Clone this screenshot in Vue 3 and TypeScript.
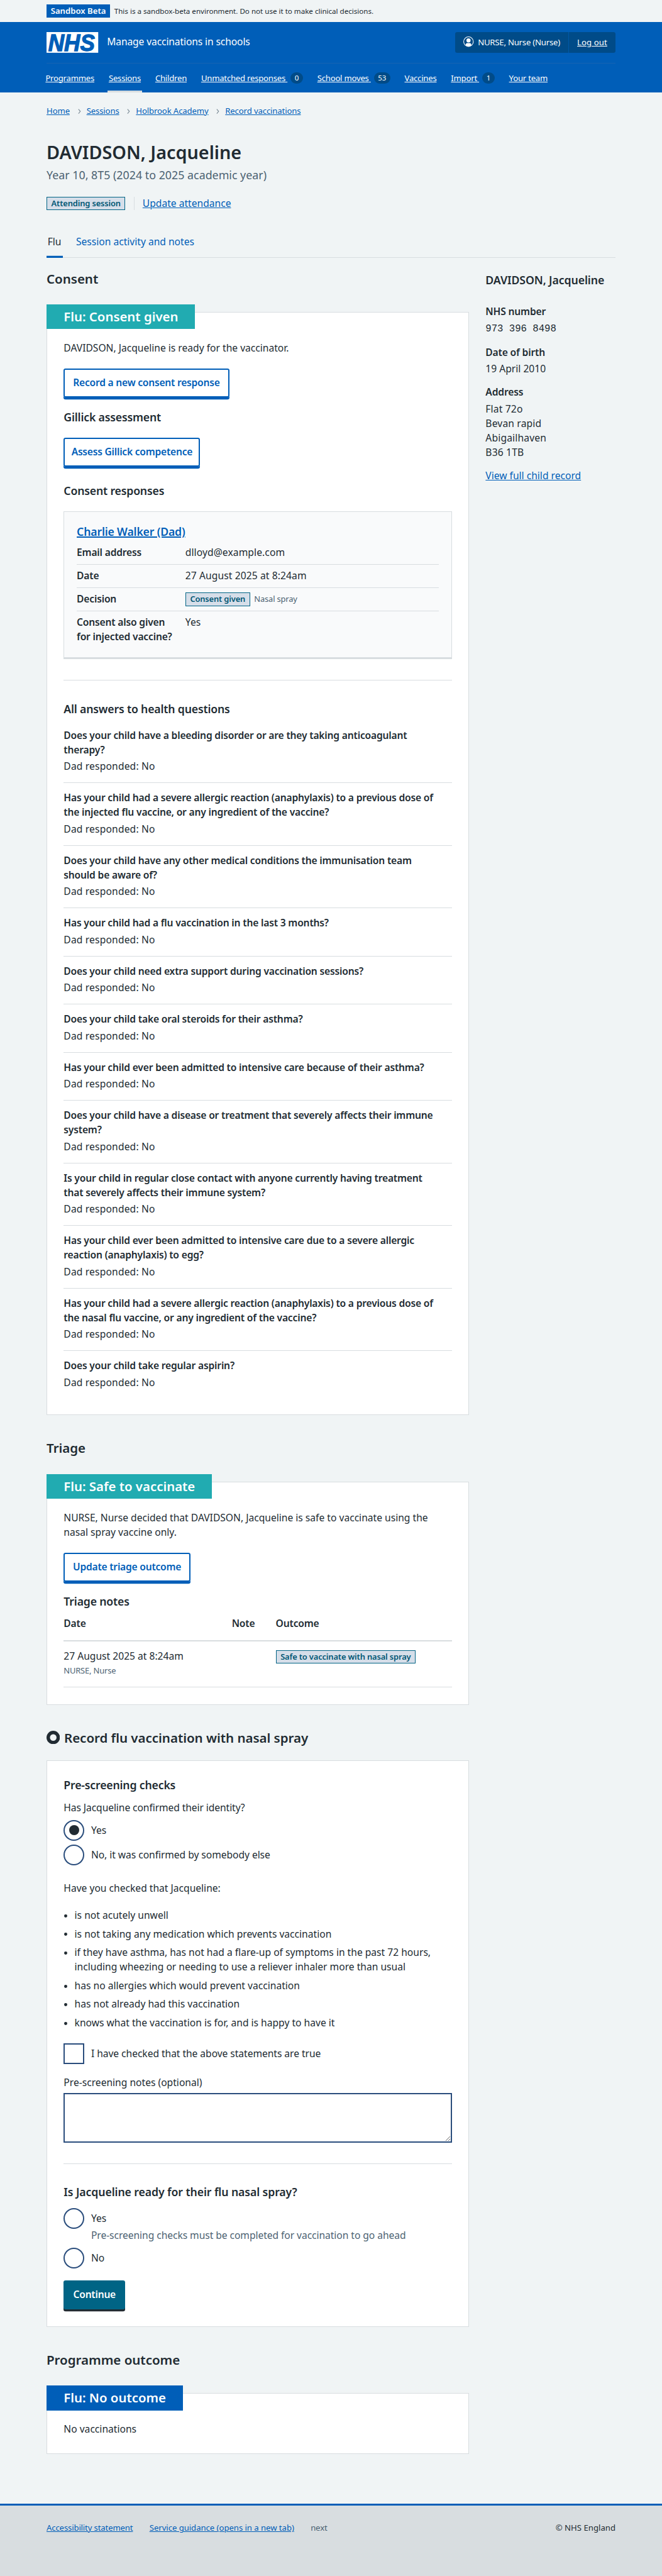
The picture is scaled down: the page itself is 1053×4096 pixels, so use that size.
<script setup lang="ts">
interface NavItem {
  label: string
  count?: number
  current?: boolean
}

const navItems: NavItem[] = [
  { label: 'Programmes' },
  { label: 'Sessions', current: true },
  { label: 'Children' },
  { label: 'Unmatched responses', count: 0 },
  { label: 'School moves', count: 53 },
  { label: 'Vaccines' },
  { label: 'Import', count: 1 },
  { label: 'Your team' },
]

const breadcrumbs: string[] = ['Home', 'Sessions', 'Holbrook Academy', 'Record vaccinations']

const address: string[] = ['Flat 72o', 'Bevan rapid', 'Abigailhaven', 'B36 1TB']

const questions: string[][] = [
  ['Does your child have a bleeding disorder or are they taking anticoagulant', 'therapy?'],
  ['Has your child had a severe allergic reaction (anaphylaxis) to a previous dose of', 'the injected flu vaccine, or any ingredient of the vaccine?'],
  ['Does your child have any other medical conditions the immunisation team', 'should be aware of?'],
  ['Has your child had a flu vaccination in the last 3 months?'],
  ['Does your child need extra support during vaccination sessions?'],
  ['Does your child take oral steroids for their asthma?'],
  ['Has your child ever been admitted to intensive care because of their asthma?'],
  ['Does your child have a disease or treatment that severely affects their immune', 'system?'],
  ['Is your child in regular close contact with anyone currently having treatment', 'that severely affects their immune system?'],
  ['Has your child ever been admitted to intensive care due to a severe allergic', 'reaction (anaphylaxis) to egg?'],
  ['Has your child had a severe allergic reaction (anaphylaxis) to a previous dose of', 'the nasal flu vaccine, or any ingredient of the vaccine?'],
  ['Does your child take regular aspirin?'],
]

const statements: string[][] = [
  ['is not acutely unwell'],
  ['is not taking any medication which prevents vaccination'],
  ['if they have asthma, has not had a flare-up of symptoms in the past 72 hours,', 'including wheezing or needing to use a reliever inhaler more than usual'],
  ['has no allergies which would prevent vaccination'],
  ['has not already had this vaccination'],
  ['knows what the vaccination is for, and is happy to have it'],
]
</script>

<template>
  <div class="page">
    <div class="banner">
      <strong class="banner-tag">Sandbox Beta</strong>
      <span class="banner-text">This is a sandbox-beta environment. Do not use it to make clinical decisions.</span>
    </div>

    <header class="header">
      <div class="header-top">
        <svg class="logo" viewBox="0 0 100 40" role="img" aria-label="NHS">
          <rect width="100" height="40" fill="#fff" />
          <text x="3.4" y="36" font-size="46" textLength="90" lengthAdjust="spacingAndGlyphs">NHS</text>
        </svg>
        <span class="service">Manage vaccinations in schools</span>
        <div class="account">
          <div class="account-user">
            <svg class="account-icon" viewBox="0 0 20 20" aria-hidden="true">
              <circle cx="10" cy="10" r="9.3" fill="none" stroke="#fff" stroke-width="1.3" />
              <circle cx="10" cy="7.6" r="4" fill="#fff" />
              <path d="M4.6 17.2v-1.400c0-1.800 1.300-3 3-3h4.800c1.700 0 3 1.200 3 3v1.400a9 9 0 0 1-10.800 0z" fill="#fff" />
            </svg>
            <span class="account-name">NURSE, Nurse (Nurse)</span>
          </div>
          <a class="account-out">Log out</a>
        </div>
      </div>
      <nav class="nav">
        <div v-for="item in navItems" :key="item.label" class="nav-item" :class="{ current: item.current }">
          <a>{{ item.label }}<template v-if="item.count !== undefined">&nbsp;</template></a>
          <span v-if="item.count !== undefined" class="count">{{ item.count }}</span>
        </div>
      </nav>
    </header>

    <div class="container">
      <nav class="breadcrumbs">
        <template v-for="(crumb, i) in breadcrumbs" :key="crumb">
          <svg v-if="i > 0" class="chevron" viewBox="0 0 6 10" aria-hidden="true">
            <path d="M1 .8L4.600 5L1 9.200" fill="none" stroke="#768692" stroke-width="1.300" />
          </svg>
          <a class="link">{{ crumb }}</a>
        </template>
      </nav>

      <h1>DAVIDSON, Jacqueline</h1>
      <p class="caption">Year 10, 8T5 (2024 to 2025 academic year)</p>
      <div class="attendance">
        <strong class="tag">Attending session</strong>
        <a class="link attendance-link">Update attendance</a>
      </div>

      <div class="tabs">
        <span class="tab active">Flu</span>
        <span class="tab">Session activity and notes</span>
      </div>

      <div class="columns">
        <main class="main">
          <h2 class="first">Consent</h2>
          <section class="card consent-card">
            <h3 class="card-title aqua">Flu: Consent given</h3>
            <p class="lead">DAVIDSON, Jacqueline is ready for the vaccinator.</p>
            <a class="button outline w-record">Record a new consent response</a>
            <h4 class="after-button">Gillick assessment</h4>
            <a class="button outline w-assess">Assess Gillick competence</a>
            <h4 class="responses-title">Consent responses</h4>
            <div class="response">
              <h4><a class="link thick">Charlie Walker (Dad)</a></h4>
              <div class="row">
                <span class="key">Email address</span><span class="value">dlloyd@example.com</span>
              </div>
              <div class="row">
                <span class="key">Date</span><span class="value">27 August 2025 at 8:24am</span>
              </div>
              <div class="row">
                <span class="key">Decision</span>
                <span class="decision"><strong class="tag">Consent given</strong><span class="small">Nasal spray</span></span>
              </div>
              <div class="row last">
                <span class="key">Consent also given<br />for injected vaccine?</span><span class="value">Yes</span>
              </div>
            </div>
            <hr class="rule" />
            <h4 class="answers-title">All answers to health questions</h4>
            <dl>
              <div v-for="(q, i) in questions" :key="i" class="qa" :class="{ tall: q.length > 1 }">
                <dt><template v-for="(line, n) in q" :key="n"><br v-if="n > 0" />{{ line }}</template></dt>
                <dd>Dad responded: No</dd>
              </div>
            </dl>
          </section>

          <h2>Triage</h2>
          <section class="card triage-card">
            <h3 class="card-title aqua">Flu: Safe to vaccinate</h3>
            <p class="lead">NURSE, Nurse decided that DAVIDSON, Jacqueline is safe to vaccinate using the<br />nasal spray vaccine only.</p>
            <a class="button outline w-triage">Update triage outcome</a>
            <h4 class="after-button">Triage notes</h4>
            <div class="notes">
              <div class="notes-head"><span>Date</span><span>Note</span><span>Outcome</span></div>
              <div class="notes-row">
                <div>
                  <div>27 August 2025 at 8:24am</div>
                  <div class="small author">NURSE, Nurse</div>
                </div>
                <div></div>
                <div class="outcome"><strong class="tag">Safe to vaccinate with nasal spray</strong></div>
              </div>
            </div>
          </section>

          <h2 class="record-title">
            <svg class="ring" viewBox="0 0 26 26" aria-hidden="true">
              <circle cx="13" cy="13" r="9.700" fill="none" stroke="#212b32" stroke-width="6.600" />
            </svg>
            Record flu vaccination with nasal spray
          </h2>
          <section class="card record-card">
            <h4 class="checks-title">Pre-screening checks</h4>
            <p class="identity">Has Jacqueline confirmed their identity?</p>
            <div class="choice"><span class="radio checked"></span><span>Yes</span></div>
            <div class="choice next"><span class="radio"></span><span>No, it was confirmed by somebody else</span></div>
            <p class="checked-that">Have you checked that Jacqueline:</p>
            <ul>
              <li v-for="(s, i) in statements" :key="i">
                <template v-for="(line, n) in s" :key="n"><br v-if="n > 0" />{{ line }}</template>
              </li>
            </ul>
            <div class="choice confirm"><span class="checkbox"></span><span>I have checked that the above statements are true</span></div>
            <p class="notes-label">Pre-screening notes (optional)</p>
            <textarea></textarea>
            <hr class="rule form-rule" />
            <h4 class="ready-title">Is Jacqueline ready for their flu nasal spray?</h4>
            <div class="choice ready"><span class="radio"></span><span>Yes</span></div>
            <p class="hint">Pre-screening checks must be completed for vaccination to go ahead</p>
            <div class="choice after-hint"><span class="radio"></span><span>No</span></div>
            <a class="button solid">Continue</a>
          </section>

          <h2>Programme outcome</h2>
          <section class="card outcome-card">
            <h3 class="card-title blue">Flu: No outcome</h3>
            <p class="lead">No vaccinations</p>
          </section>
        </main>

        <aside class="side">
          <h4>DAVIDSON, Jacqueline</h4>
          <div class="fact number"><b>NHS number</b><span><span class="mono">973 396 8498</span></span></div>
          <div class="fact dob"><b>Date of birth</b><span>19 April 2010</span></div>
          <div class="fact address"><b>Address</b><span v-for="line in address" :key="line" class="line">{{ line }}</span></div>
          <a class="link side-link">View full child record</a>
        </aside>
      </div>
    </div>

    <footer class="footer">
      <div class="footer-inner">
        <a class="link">Accessibility statement</a>
        <a class="link guidance">Service guidance (opens in a new tab)</a>
        <span class="version">next</span>
        <span class="copyright">© NHS England</span>
      </div>
    </footer>
  </div>
</template>

<style>
html {
  font-size: 8.2255px;
}
body {
  margin: 0;
  background: #d8dde0;
}
</style>

<style scoped>
.page,
.page * {
  box-sizing: border-box;
}
.page {
  height: 498rem;
  background: #f0f4f5;
  color: #212b32;
  font-family: "Noto Sans", "Open Sans", sans-serif;
  font-size: 1.9rem;
  line-height: 2.8rem;
  display: flex;
  flex-direction: column;
  overflow: hidden;
}
h1, h2, h3, h4, p, ul, dl, dd, dt {
  margin: 0;
  padding: 0;
}
.link {
  color: #005eb8;
  text-decoration: underline;
  text-decoration-thickness: 1px;
  white-space: nowrap;
}
.thick {
  text-decoration-thickness: 2px;
}

.banner {
  flex: none;
  height: 4.2rem;
  padding: 0 9rem;
  display: flex;
  align-items: center;
  gap: 0.8rem;
}
.banner-tag {
  background: #005eb8;
  color: #fff;
  width: 12.3rem;
  height: 2.6rem;
  line-height: 2.6rem;
  text-align: center;
  font-size: 1.6rem;
  font-weight: 600;
}
.banner-text {
  font-size: 1.41rem;
}

.header {
  flex: none;
  height: 13.7rem;
  background: #005eb8;
  color: #fff;
  padding: 2rem 9rem 0;
}
.header-top {
  height: 6.1rem;
  display: flex;
  align-items: flex-start;
  border-bottom: 1px solid #1763b2;
}
.logo {
  display: block;
  width: 10rem;
  height: 4rem;
  overflow: visible;
}
.logo text {
  font-family: "Liberation Sans", Arial, sans-serif;
  font-weight: 700;
  font-style: italic;
  fill: #005eb8;
  stroke: #005eb8;
  stroke-width: 1.6;
}
.service {
  margin-left: 1.7rem;
  line-height: 3.8rem;
  letter-spacing: -0.014rem;
}
.account {
  margin-left: auto;
  width: 31rem;
  height: 4rem;
  display: flex;
  background: #004b88;
  border-radius: 0.4rem;
  font-size: 1.6rem;
  line-height: 4rem;
  white-space: nowrap;
}
.account-user {
  width: 22rem;
  padding-left: 1.6rem;
  display: flex;
  border-right: 1px solid #0059a8;
}
.account-icon {
  width: 2rem;
  height: 2rem;
  margin: 0.9rem 0.8rem 0 0;
}
.account-name {
  letter-spacing: -0.027rem;
}
.account-out {
  flex: 1;
  text-align: center;
  text-decoration: underline;
  letter-spacing: 0.01rem;
}
.nav {
  height: 5.6rem;
  margin-left: -0.2rem;
  display: flex;
  gap: 2.78rem;
  font-size: 1.6rem;
  letter-spacing: -0.029rem;
  white-space: nowrap;
}
.nav-item {
  display: flex;
  align-items: center;
  height: 5.6rem;
}
.nav-item.current {
  margin: 0 -0.2rem;
  padding: 3px 0.2rem 0;
  border-bottom: 3px solid #d8dde0;
}
.nav a {
  text-decoration: underline;
}
.count {
  margin-left: 0.6rem;
  min-width: 2.4rem;
  height: 2.2rem;
  padding: 0 0.8rem;
  border-radius: 1.2rem;
  background: #004b88;
  font-size: 1.4rem;
  line-height: 2.3rem;
  text-align: center;
}

.container {
  flex: 1;
  padding: 0 9rem;
}
.breadcrumbs {
  margin-top: 2.38rem;
  height: 2.4rem;
  line-height: 2.4rem;
  font-size: 1.6rem;
  letter-spacing: -0.016rem;
  display: flex;
  align-items: center;
}
.chevron {
  width: 0.6rem;
  height: 1rem;
  margin: 0.2rem 1.1rem 0 1.55rem;
}
h1 {
  margin-top: 4.56rem;
  font-size: 3.5rem;
  line-height: 4.4rem;
  font-weight: 600;
}
.caption {
  margin-top: 0.62rem;
  font-size: 2.17rem;
  line-height: 3.2rem;
  color: #4c6272;
}
.attendance {
  margin-top: 2.54rem;
  height: 2.6rem;
  display: flex;
  align-items: center;
}
.attendance-link {
  margin-left: 1.6rem;
  padding-left: 1.6rem;
  border-left: 1px solid #d8dde0;
  line-height: 2.6rem;
}
.tag {
  display: inline-block;
  height: 2.6rem;
  padding: 0 0.8rem;
  border: 1px solid #006385;
  background: #d6dee9;
  color: #005674;
  font-size: 1.57rem;
  line-height: 2.3rem;
  font-weight: 600;
  letter-spacing: -0.018rem;
  white-space: nowrap;
}
.tabs {
  margin-top: 4.76rem;
  height: 4.54rem;
  display: flex;
  gap: 2.4rem;
  border-bottom: 1px solid #d8dde0;
}
.tab {
  padding: 0 0.2rem;
  height: 4.54rem;
  color: #005eb8;
}
.tab.active {
  width: 3.1rem;
  color: #212b32;
  box-shadow: inset 0 -0.4rem #005eb8;
}

.columns {
  display: flex;
}
.main {
  width: 81.7rem;
  margin-right: 3.2rem;
}
h2 {
  margin-top: 4.73rem;
  font-size: 2.5rem;
  line-height: 3.2rem;
  font-weight: 600;
  letter-spacing: -0.005rem;
}
h2.first {
  margin-top: 2.33rem;
}
h4 {
  font-size: 2.15rem;
  line-height: 2.8rem;
  font-weight: 600;
  letter-spacing: -0.022rem;
}
.card {
  margin-top: 4.87rem;
  padding: 0 3.2rem;
  background: #fff;
  border: 1px solid #d8dde0;
}
.card-title {
  width: fit-content;
  height: 4.8rem;
  margin: -1.6rem 0 0 -3.32rem;
  padding: 0 3.25rem 0 3.3rem;
  color: #fff;
  font-size: 2.48rem;
  line-height: 4.75rem;
  font-weight: 600;
}
.aqua {
  background: #21abb1;
}
.blue {
  background: #005eb8;
}
.consent-card {
  height: 213.3rem;
}
.triage-card {
  height: 43.15rem;
}
.record-card {
  height: 109.5rem;
}
.outcome-card {
  height: 11.8rem;
}
.lead {
  margin-top: 2.26rem;
  white-space: nowrap;
}
.button {
  display: block;
  margin-top: 2.54rem;
  height: 5.6rem;
  border-radius: 0.4rem;
  line-height: 5.1rem;
  text-align: center;
  font-weight: 600;
  letter-spacing: -0.028rem;
  white-space: nowrap;
}
.outline {
  border: 2px solid #005eb8;
  color: #005eb8;
  box-shadow: 0 0.4rem #005eb8;
}
.solid {
  background: #006485;
  color: #fff;
  width: 11.9rem;
  margin-top: 2.4rem;
  line-height: 5.4rem;
  box-shadow: 0 0.4rem #212b32;
}
.w-record {
  width: 32rem;
}
.w-assess {
  width: 26.4rem;
}
.w-triage {
  width: 24.5rem;
}
.after-button {
  margin-top: 2.5rem;
}
.responses-title {
  margin-top: 3.27rem;
}
.response {
  margin-top: 2.5rem;
  height: 28.6rem;
  padding: 2.45rem 2.4rem 0;
  background: #f9fafb;
  border: 1px solid #d8dde0;
  border-bottom-width: 3px;
}
.row {
  height: 4.5rem;
  padding-top: 0.71rem;
  display: flex;
  border-bottom: 1px solid #d8dde0;
}
.response h4 {
  margin-bottom: 0.48rem;
}
.row.last {
  height: 7.1rem;
  border-bottom: 0;
}
.key {
  width: 21rem;
  font-weight: 600;
  letter-spacing: -0.022rem;
  white-space: nowrap;
}
.value {
  letter-spacing: 0.012rem;
}
.decision {
  display: flex;
  align-items: center;
  gap: 0.8rem;
  height: 2.8rem;
  margin-top: 0.1rem;
}
.small {
  font-size: 1.57rem;
  line-height: 2.4rem;
  letter-spacing: -0.02rem;
  color: #4c6272;
}
.rule {
  height: 1px;
  margin: 4rem 0 0;
  border: 0;
  background: #d8dde0;
}
.answers-title {
  margin-top: 4.1rem;
}
dl {
  margin-top: 0.88rem;
}
.qa {
  height: 9.3rem;
  padding-top: 1.46rem;
  border-bottom: 1px solid #d8dde0;
  white-space: nowrap;
}
.qa.tall {
  height: 12.1rem;
}
.qa:last-child {
  border-bottom: 0;
}
dt {
  font-weight: 600;
  letter-spacing: -0.022rem;
}
dd {
  margin-top: 0.4rem;
  letter-spacing: 0.02rem;
}
.notes-head,
.notes-row {
  display: grid;
  grid-template-columns: 32.5rem 8.5rem 1fr;
  border-bottom: 2px solid #d8dde0;
}
.notes-head {
  height: 6.28rem;
  padding-top: 1.49rem;
  font-weight: 600;
  letter-spacing: -0.02rem;
}
.notes-row {
  height: 8.85rem;
  padding-top: 1.46rem;
  border-bottom-width: 1px;
}
.author {
  margin-top: 0.32rem;
}
.outcome {
  padding-top: 0.24rem;
  line-height: 0;
}
.outcome .tag {
  line-height: 2.3rem;
}

.record-title {
  display: flex;
  align-items: center;
  gap: 0.8rem;
}
.ring {
  width: 2.6rem;
  height: 2.6rem;
}
.record-card {
  margin-top: 2.87rem;
}
.checks-title {
  margin-top: 3.2rem;
}
.identity {
  margin-top: 1.59rem;
  letter-spacing: -0.01rem;
}
.choice {
  margin-top: 0.94rem;
  height: 4rem;
  line-height: 4.1rem;
  display: flex;
  gap: 1.3rem;
  letter-spacing: -0.006rem;
}
.choice.next {
  margin-top: 0.8rem;
}
.radio,
.checkbox {
  display: flex;
  width: 4rem;
  height: 4rem;
  border: 2px solid #2a4d7c;
  background: #fff;
}
.radio {
  border-radius: 50%;
  align-items: center;
  justify-content: center;
}
.radio.checked::after {
  content: "";
  width: 2rem;
  height: 2rem;
  border-radius: 50%;
  background: #212b32;
}
.checked-that {
  margin-top: 3.06rem;
}
ul {
  margin-top: 2.4rem;
  padding-left: 2.1rem;
  list-style: none;
  white-space: nowrap;
}
li {
  margin-bottom: 0.8rem;
}
li::before {
  content: "";
  float: left;
  width: 0.6rem;
  height: 0.6rem;
  margin: 1.2rem 0 0 -2rem;
  border-radius: 50%;
  background: #212b32;
}
.choice.confirm {
  margin-top: 2.54rem;
}
ul li:last-child {
  margin-bottom: 0;
}
.notes-label {
  margin-top: 2.26rem;
}
textarea {
  display: block;
  width: 100%;
  height: 9.6rem;
  margin-top: 0.54rem;
  border: 2px solid #2a4d7c;
  background: #fff;
  resize: vertical;
}
.ready-title {
  margin-top: 4.05rem;
  letter-spacing: -0.012rem;
}
.choice.ready {
  margin-top: 1.73rem;
}
.hint {
  margin: -0.14rem 0 0 5.3rem;
  color: #4c6272;
  letter-spacing: -0.007rem;
}
.side {
  width: 25.1rem;
  padding-top: 2.87rem;
}
.side h4 {
  white-space: nowrap;
  letter-spacing: -0.01rem;
}
.fact {
  display: flex;
  flex-direction: column;
}
.fact b {
  font-weight: 600;
  margin-bottom: 0.4rem;
  letter-spacing: -0.02rem;
}
.number {
  margin-top: 3.25rem;
}
.mono {
  font-family: "Liberation Mono", monospace;
  line-height: 1;
}
.dob {
  margin-top: 1.95rem;
}
.address {
  margin-top: 1.7rem;
}
.line {
  letter-spacing: 0.02rem;
}
.side-link {
  display: block;
  margin-top: 1.7rem;
}

.footer {
  flex: none;
  height: 14rem;
  border-top: 3px solid #005eb8;
  background: #d8dde0;
  padding: 3.2rem 9rem 0;
}
.footer-inner {
  display: flex;
  gap: 3.2rem;
  font-size: 1.6rem;
  line-height: 2.4rem;
  letter-spacing: -0.018rem;
}
.guidance {
  letter-spacing: -0.006rem;
}
.version {
  color: #4c6272;
}
.copyright {
  margin-left: auto;
  letter-spacing: 0;
}
</style>
